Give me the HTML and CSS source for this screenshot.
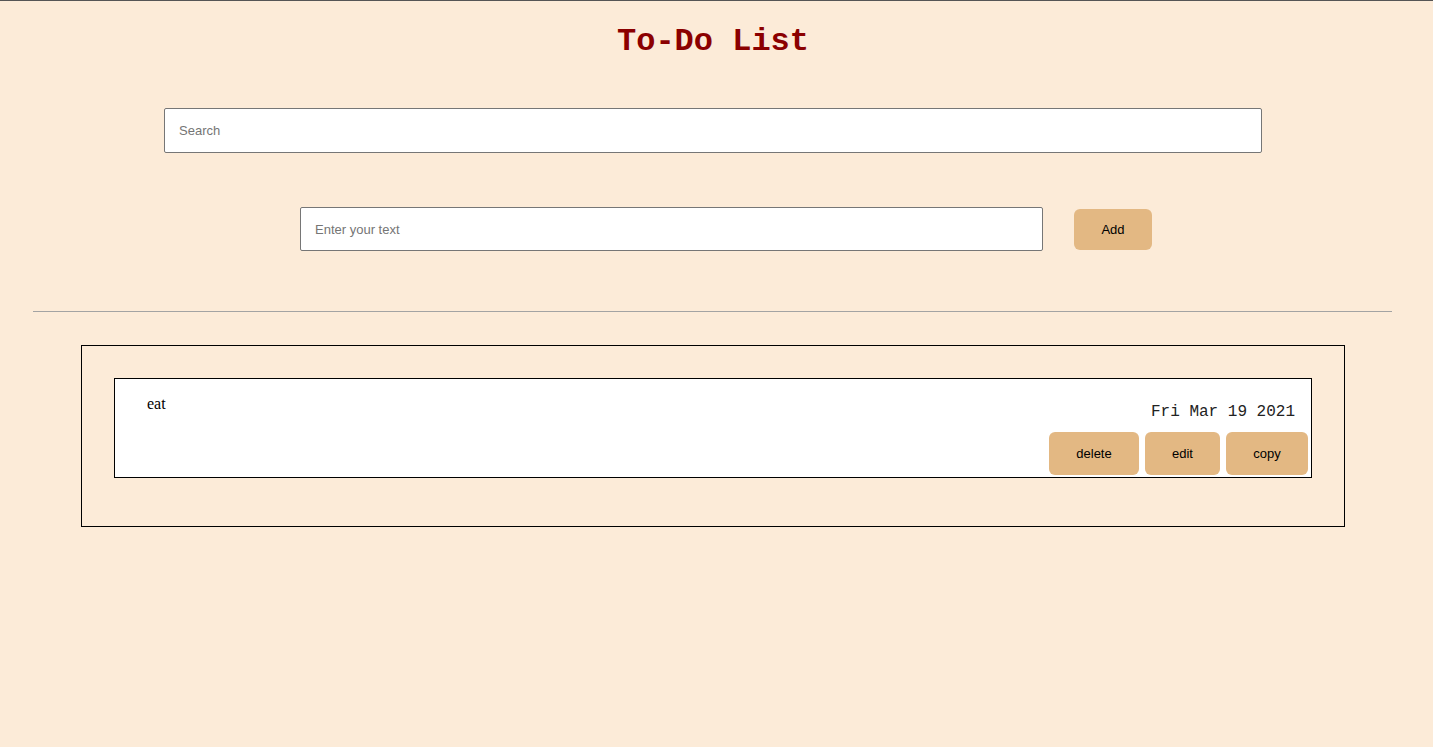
FILE: index.html
```html
<!DOCTYPE html>
<html>
<head>
<meta charset="utf-8">
<title>To-Do List</title>
<link rel="stylesheet" href="styles.css">
</head>
<body>
<div class="page">
  <h1 class="title">To-Do List</h1>
  <div class="search-row">
    <input class="search" type="text" placeholder="Search">
  </div>
  <div class="add-row">
    <input class="new-text" type="text" placeholder="Enter your text">
    <button class="btn add-btn">Add</button>
  </div>
  <hr class="divider">
  <div class="list">
    <div class="item">
      <div class="item-text">eat</div>
      <div class="item-side">
        <div class="item-date">Fri Mar 19 2021</div>
        <div class="item-actions">
          <button class="btn act delete">delete</button>
          <button class="btn act edit">edit</button>
          <button class="btn act copy">copy</button>
        </div>
      </div>
    </div>
  </div>
</div>
</body>
</html>
```

FILE: styles.css
```css
html, body {
  margin: 0;
  padding: 0;
}
body {
  background: #fcebd8;
  border-top: 1px solid #555555;
  min-height: 746px;
}
.page {
  padding-right: 7px;
}
.title {
  margin: 0;
  padding-top: 22px;
  text-align: center;
  font-family: "Liberation Mono", "Courier New", monospace;
  font-weight: bold;
  font-size: 32px;
  line-height: 38px;
  color: #8b0000;
}
.search-row {
  display: flex;
  justify-content: center;
  margin-top: 47px;
}
.search, .new-text {
  box-sizing: border-box;
  border: 1px solid #767676;
  border-radius: 2px;
  background: #ffffff;
  font-family: "Liberation Sans", Arial, sans-serif;
  font-size: 13px;
  padding: 0 14px;
  color: #000;
  outline: none;
}
.search::placeholder, .new-text::placeholder {
  color: #757575;
}
.search {
  width: 1098px;
  height: 45px;
}
.add-row {
  display: flex;
  justify-content: center;
  align-items: center;
  gap: 31px;
  margin-top: 54px;
  padding-left: 26px;
}
.new-text {
  width: 743px;
  height: 44px;
}
.btn {
  border: none;
  border-radius: 6px;
  background: #e3b883;
  color: #000;
  font-family: "Liberation Sans", Arial, sans-serif;
  font-size: 13px;
  padding: 0;
  cursor: pointer;
}
.add-btn {
  width: 78px;
  height: 41px;
}
.divider {
  margin: 60px 34px 0 33px;
  border: none;
  border-top: 1px solid #a3a3a3;
  height: 0;
}
.list {
  margin: 33px 81px 0 81px;
  border: 1px solid #000;
  padding: 32px 32px 48px 32px;
}
.item {
  display: flex;
  justify-content: space-between;
  border: 1px solid #000;
  background: #ffffff;
  height: 98px;
}
.item-text {
  padding: 16px 0 0 32px;
  font-family: "Liberation Serif", "Times New Roman", serif;
  font-size: 16px;
  line-height: 18px;
}
.item-side {
  display: flex;
  flex-direction: column;
  align-items: flex-end;
  justify-content: flex-end;
  padding: 0 3px 2px 0;
}
.item-date {
  font-family: "Liberation Mono", "Courier New", monospace;
  font-size: 16px;
  line-height: 18px;
  color: #222;
  padding-right: 13px;
  margin-bottom: 11px;
}
.item-actions {
  display: flex;
  gap: 6px;
}
.act {
  height: 43px;
}
.delete { width: 90px; }
.edit { width: 75px; }
.copy { width: 82px; }
```
